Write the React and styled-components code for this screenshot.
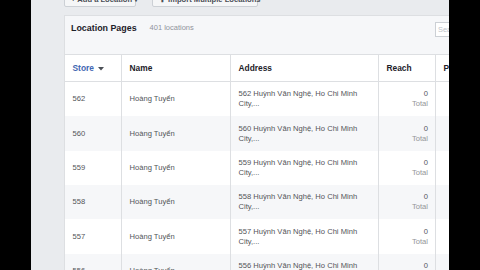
import React from "react";
import styled, { createGlobalStyle } from "styled-components";

const Global = createGlobalStyle`
  html, body { margin: 0; padding: 0; width: 480px; height: 270px; overflow: hidden; background: #000; }
  * { box-sizing: border-box; }
  body { font-family: "Liberation Sans", Arial, sans-serif; }
`;

const Page = styled.div`
  display: flex;
  width: 480px;
  height: 270px;
  overflow: hidden;
`;

const Letterbox = styled.div`
  width: 31px;
  flex: none;
  background: #000;
`;

const Main = styled.div`
  flex: 1;
  min-width: 0;
  background: #e9ebee;
  overflow: hidden;
  padding-left: 33px;
`;

const Toolbar = styled.div`
  display: flex;
  gap: 16px;
  margin-top: -8px;
  height: 15px;
`;

const ToolButton = styled.div`
  display: flex;
  align-items: center;
  gap: 3px;
  height: 15px;
  width: ${(p) => p.$w}px;
  padding: 0 6px;
  border: 1px solid #ccd0d5;
  border-radius: 2px;
  background: #f5f6f7;
  color: #4b4f56;
  font-size: 7.6px;
  font-weight: bold;
  white-space: nowrap;
`;

const Card = styled.div`
  margin-top: 8px;
  width: 439px;
  background: #fff;
  border: 1px solid #dddfe2;
  border-right: none;
`;

const CardHeader = styled.div`
  display: flex;
  align-items: flex-start;
  height: 39px;
  padding: 6px 8px 0 6px;
  background: #f6f7f9;
  border-bottom: 1px solid #dddfe2;
`;

const Title = styled.div`
  font-size: 8.9px;
  font-weight: bold;
  color: #1d2129;
  line-height: 12px;
`;

const Count = styled.div`
  margin-left: 13px;
  font-size: 7.5px;
  color: #90949c;
  line-height: 12px;
`;

const Search = styled.div`
  margin-left: auto;
  width: 60px;
  height: 15px;
  border: 1px solid #ccd0d5;
  background: #fff;
  padding-left: 2px;
  font-size: 7.4px;
  line-height: 13px;
  color: #bec3c9;
`;

const Grid = styled.div`
  display: grid;
  grid-template-columns: 57px 109px 148px 57px 1fr;
`;

const HeadCell = styled.div`
  display: flex;
  align-items: center;
  height: 27px;
  padding: 0 7.5px;
  border-right: ${(p) => (p.$last ? "none" : "1px solid #dddfe2")};
  border-bottom: 1px solid #dddfe2;
  font-size: 8.4px;
  font-weight: bold;
  color: ${(p) => (p.$active ? "#4267b2" : "#1d2129")};
  white-space: nowrap;
`;

const Cell = styled.div`
  display: flex;
  flex-direction: column;
  justify-content: center;
  align-items: ${(p) => (p.$right ? "flex-end" : "flex-start")};
  height: 34.35px;
  padding: 0 7px 0 7.5px;
  background: ${(p) => (p.$alt ? "#f6f7f9" : "#fff")};
  border-right: ${(p) => (p.$last ? "none" : "1px solid #dddfe2")};
  font-size: 7.6px;
  line-height: 10px;
  color: #525458;
  white-space: nowrap;
`;

const Sub = styled.span`
  color: #939598;
`;

const Caret = () => (
  <svg width="6" height="4" viewBox="0 0 6 4" style={{ marginLeft: 4, marginTop: 2 }}>
    <path d="M0 0h6L3 3.5z" fill="#4b4f56" />
  </svg>
);

const rows = [562, 560, 559, 558, 557, 556];

export default function App() {
  return (
    <>
      <Global />
      <Page>
        <Letterbox />
        <Main>
          <Toolbar>
            <ToolButton $w={72}>+ Add a Location ▾</ToolButton>
            <ToolButton $w={106}>✚ Import Multiple Locations</ToolButton>
          </Toolbar>
          <Card>
            <CardHeader>
              <Title>Location Pages</Title>
              <Count>401 locations</Count>
              <Search>Search</Search>
            </CardHeader>
            <Grid>
              <HeadCell $active>
                Store
                <Caret />
              </HeadCell>
              <HeadCell>Name</HeadCell>
              <HeadCell>Address</HeadCell>
              <HeadCell>Reach</HeadCell>
              <HeadCell $last>Pages</HeadCell>
              {rows.map((n, i) => {
                const alt = i % 2 === 1;
                return (
                  <React.Fragment key={n}>
                    <Cell $alt={alt}>{n}</Cell>
                    <Cell $alt={alt}>Hoàng Tuyển</Cell>
                    <Cell $alt={alt}>
                      <span>{n} Huỳnh Văn Nghệ, Ho Chi Minh</span>
                      <span>City,...</span>
                    </Cell>
                    <Cell $alt={alt} $right>
                      <span>0</span>
                      <Sub>Total</Sub>
                    </Cell>
                    <Cell $alt={alt} $last />
                  </React.Fragment>
                );
              })}
            </Grid>
          </Card>
        </Main>
        <Letterbox />
      </Page>
    </>
  );
}
